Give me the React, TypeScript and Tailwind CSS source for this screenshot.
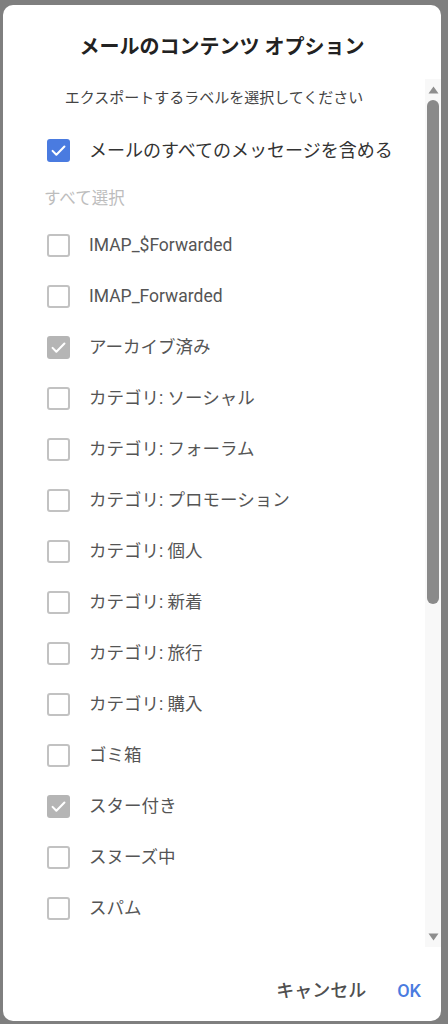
import { FC } from 'react';

type Label = { name: string; checked: boolean };

const labels: Label[] = [
  { name: 'IMAP_$Forwarded', checked: false },
  { name: 'IMAP_Forwarded', checked: false },
  { name: 'アーカイブ済み', checked: true },
  { name: 'カテゴリ: ソーシャル', checked: false },
  { name: 'カテゴリ: フォーラム', checked: false },
  { name: 'カテゴリ: プロモーション', checked: false },
  { name: 'カテゴリ: 個人', checked: false },
  { name: 'カテゴリ: 新着', checked: false },
  { name: 'カテゴリ: 旅行', checked: false },
  { name: 'カテゴリ: 購入', checked: false },
  { name: 'ゴミ箱', checked: false },
  { name: 'スター付き', checked: true },
  { name: 'スヌーズ中', checked: false },
  { name: 'スパム', checked: false },
];

const Check = () => (
  <svg viewBox="0 0 24 24" width="19" height="19" fill="none">
    <path d="M4.5 12.5l4.8 4.8L19.5 7" stroke="#fff" strokeWidth="2.6" strokeLinecap="round" strokeLinejoin="round" />
  </svg>
);

const Box: FC<{ checked: boolean; blue?: boolean }> = ({ checked, blue }) => {
  if (checked) {
    return (
      <span
        className={`flex h-[23px] w-[23px] shrink-0 items-center justify-center rounded-[3px] ${
          blue ? 'bg-[#4a7be0]' : 'bg-[#b5b5b5]'
        }`}
      >
        <Check />
      </span>
    );
  }
  return <span className="h-[23px] w-[23px] shrink-0 rounded-[3px] border-2 border-[#c2c2c2] bg-white" />;
};

export default function App() {
  return (
    <div
      className="h-[1024px] w-[448px] overflow-hidden bg-[#7f7f7f] pl-[3px] pt-[5px]"
      style={{ fontFamily: "Roboto, 'Noto Sans CJK JP', sans-serif" }}
    >
      <div className="flex h-[1016px] w-[438px] flex-col overflow-hidden rounded-[10px] bg-white">
        {/* title */}
        <div className="flex h-[74px] items-end justify-center pb-[18px]">
          <h1 className="text-[20px] font-bold leading-[28px] text-[#222]">メールのコンテンツ オプション</h1>
        </div>

        {/* scroll area */}
        <div className="flex h-[868px]">
          <div className="flex-1 overflow-hidden">
            <p className="pt-[9px] text-center text-[15px] leading-[20px] text-[#444]">
              エクスポートするラベルを選択してください
            </p>
            <div className="mt-[20px] flex h-[44px] items-center gap-[19px] pl-[44px]">
              <Box checked blue />
              <span className="text-[18px] text-[#333]">メールのすべてのメッセージを含める</span>
            </div>
            <div className="mt-[15px] pl-[41px] text-[16.5px] leading-[24px] text-[#bdbdbd]">すべて選択</div>
            <div className="mt-[9px] flex flex-col">
              {labels.map((l) => (
                <div key={l.name} className="flex h-[51px] items-center gap-[19px] pl-[44px]">
                  <Box checked={l.checked} />
                  <span className="text-[17.5px] text-[#555]">{l.name}</span>
                </div>
              ))}
              {/* next row, only its box edge shows above the fold */}
              <div className="flex h-[51px] items-center pl-[44px]">
                <Box checked={false} />
              </div>
            </div>
          </div>

          {/* scrollbar */}
          <div className="flex w-[16px] flex-col items-center bg-[#f8f8f8] pt-[7px]">
            <svg width="11" height="8" viewBox="0 0 11 8">
              <path d="M5.5 0.5L10.5 7.5H0.5z" fill="#8e8e8e" />
            </svg>
            <div className="mt-[6px] h-[504px] w-[12px] rounded-full bg-[#8a8a8a]" />
            <div className="flex-1" />
            <svg width="11" height="8" viewBox="0 0 11 8" className="mb-[6px]">
              <path d="M0.5 0.5H10.5L5.5 7.5z" fill="#8e8e8e" />
            </svg>
          </div>
        </div>

        {/* footer */}
        <div className="flex flex-1 items-center justify-end gap-[31px] pr-[20px] pt-[12px]">
          <button className="text-[18px] font-medium text-[#505050]">キャンセル</button>
          <button className="text-[18px] font-medium text-[#4a7be0]">OK</button>
        </div>
      </div>
    </div>
  );
}
